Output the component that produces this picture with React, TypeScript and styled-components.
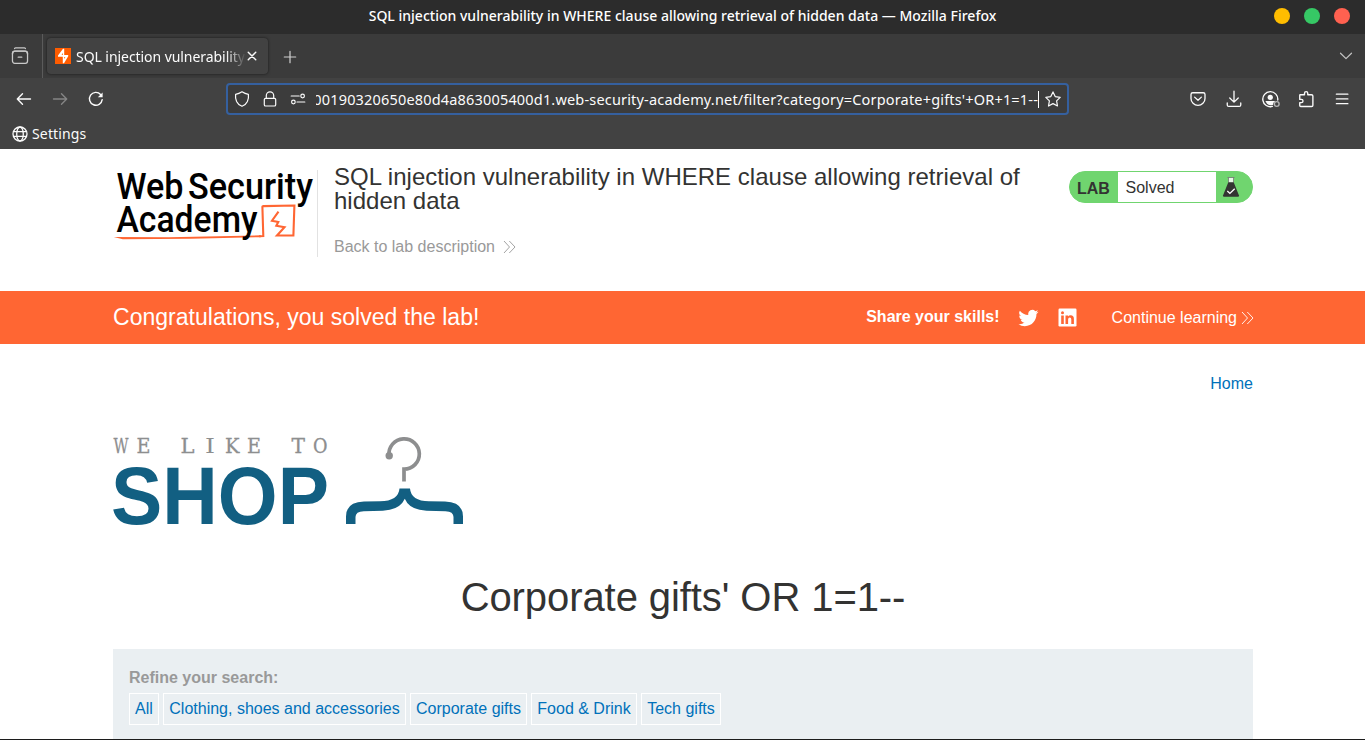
import React from 'react';
import styled, { createGlobalStyle } from 'styled-components';

const UI = `"Noto Sans", "Open Sans", sans-serif`;
const ARIAL = `"Liberation Sans", Arial, sans-serif`;

const GlobalStyle = createGlobalStyle`
  * { box-sizing: border-box; }
  body { margin: 0; background: #fff; overflow: hidden; }
`;

const Window = styled.div`
  width: 1365px;
  height: 740px;
  display: flex;
  flex-direction: column;
  overflow: hidden;
  border-bottom: 1px solid #1c1c1c;
`;

const TitleBar = styled.header`
  flex: none;
  height: 34px;
  display: grid;
  grid-template-columns: 1fr auto 1fr;
  align-items: center;
  padding: 0 15px 2px;
  background: #2c2c2c;
  color: #fff;
  font: 500 14px/20px ${UI};
`;
const WindowTitle = styled.span`
  grid-column: 2;
  letter-spacing: 0.01px;
  white-space: nowrap;
`;
const WindowButtons = styled.div`
  display: flex;
  justify-content: flex-end;
  gap: 14px;
`;
const Dot = styled.i<{ $color: string }>`
  width: 16px;
  height: 16px;
  border-radius: 50%;
  background: ${(p) => p.$color};
`;

const TabStrip = styled.div`
  flex: none;
  height: 44px;
  display: flex;
  align-items: center;
  background: #3b3b3b;
  color: #fbfbfb;
`;
const TabOverview = styled.div`
  width: 43px;
  height: 44px;
  padding-left: 11px;
  display: flex;
  align-items: center;
  border-right: 1px solid #5b5b5b;
`;
const Tab = styled.div`
  width: 221px;
  height: 36px;
  margin-left: 4px;
  padding: 0 8px;
  display: flex;
  align-items: center;
  border-radius: 4px;
  background: #424242;
  box-shadow: 0 0 3px rgba(0, 0, 0, 0.6);
`;
const TabTitle = styled.span`
  width: 170px;
  margin-left: 5px;
  padding-top: 1px;
  overflow: hidden;
  white-space: nowrap;
  font: 14px/20px ${UI};
  letter-spacing: -0.06px;
  mask-image: linear-gradient(to right, #000 150px, transparent 170px);
`;
const NewTab = styled.div`
  display: flex;
  margin-left: 14px;
  padding-top: 1px;
`;
const TabListButton = styled.div`
  display: flex;
  margin-left: auto;
  margin-right: 11px;
`;

const NavBar = styled.nav`
  flex: none;
  height: 42px;
  display: flex;
  align-items: center;
  background: #424242;
  color: #fbfbfb;
`;
const NavButtons = styled.div`
  width: 226px;
  padding-left: 16px;
  display: flex;
  gap: 20px;
`;
const AddressBar = styled.div`
  width: 843px;
  height: 32px;
  padding: 0 6px;
  display: flex;
  align-items: center;
  border: 2px solid #35609f;
  border-radius: 4px;
  background: #3c3c3c;
`;
const AddressIcons = styled.div`
  display: flex;
  gap: 12px;
`;
const Address = styled.div`
  width: 722px;
  margin-left: 10px;
  display: flex;
  justify-content: flex-end;
  overflow: hidden;
  white-space: nowrap;
  font: 14.5px/24px ${UI};
  letter-spacing: 0.175px;
`;
const Caret = styled.i`
  width: 1px;
  height: 17px;
  margin-right: 6px;
  background: #fff;
`;
const ToolButtons = styled.div`
  display: flex;
  gap: 16px;
  margin-left: auto;
  margin-right: 13px;
`;
const Bookmarks = styled.div`
  flex: none;
  height: 29px;
  padding: 0 12px 1px;
  display: flex;
  align-items: center;
  gap: 4px;
  background: #424242;
  color: #fbfbfb;
  font: 14px/20px ${UI};
  letter-spacing: 0.15px;
`;

const Page = styled.main`
  flex: 1;
  display: flex;
  flex-direction: column;
  background: #fff;
  color: #333332;
  font: 16px/20px ${ARIAL};
`;
const Container = styled.div`
  width: 1140px;
  margin: 0 auto 0 113px;
`;
const LabHeader = styled(Container)`
  height: 142px;
  display: flex;
  align-items: flex-start;
`;
const AcademyLogo = styled.div`
  width: 205px;
  height: 87px;
  margin-top: 21px;
  border-right: 1px solid #e2e2e2;
  svg { display: block; overflow: visible; }
`;
const LabTitle = styled.div`
  width: 700px;
  margin: 16px 0 0 16px;
`;
const Heading = styled.h2`
  margin: 0;
  font-weight: 400;
  font-size: 24px;
  line-height: 24px;
  letter-spacing: 0.015px;
`;
const BackLink = styled.a`
  display: flex;
  align-items: center;
  gap: 8px;
  margin-top: 24px;
  color: #999;
`;
const Badge = styled.div`
  width: 184px;
  height: 32px;
  margin: 22px 0 0 auto;
  display: flex;
  align-items: stretch;
  border: 1px solid #70d56f;
  border-radius: 16px;
  background: #70d56f;
  line-height: 33px;
`;
const BadgeLabel = styled.b`
  width: 48px;
  padding-left: 7px;
`;
const BadgeStatus = styled.span`
  width: 98px;
  padding-left: 7.5px;
  line-height: 31px;
  background: #fff;
`;
const BadgeIcon = styled.span`
  display: flex;
  align-items: center;
  padding-left: 6px;
`;

const Banner = styled.section`
  height: 53px;
  background: #ff6633;
  color: #fff;
`;
const BannerRow = styled(Container)`
  height: 53px;
  display: flex;
  align-items: center;
`;
const Congrats = styled.span`
  margin-right: auto;
  padding-bottom: 2px;
  font-size: 23px;
  letter-spacing: 0.02px;
`;
const Share = styled.b`
  padding-bottom: 2px;
`;
const Social = styled.div`
  display: flex;
  gap: 19px;
  margin: 0 35px 0 18px;
`;
const Continue = styled.a`
  display: flex;
  align-items: center;
  gap: 4px;
  margin-right: -1px;
`;

const TopLinks = styled(Container)`
  height: 93px;
  padding-top: 30px;
  text-align: right;
  color: #0071ba;
`;
const ShopLogo = styled(Container)`
  height: 88px;
  svg { display: block; overflow: visible; }
`;
const CategoryTitle = styled.h1`
  width: 1140px;
  margin: 49px 0 0 113px;
  height: 75px;
  text-align: center;
  font-weight: 400;
  font-size: 40px;
  line-height: 46px;
  letter-spacing: -0.08px;
`;
const Filters = styled(Container)`
  flex: 1;
  padding: 19px 16px 0;
  background: #eaeff2;
`;
const FilterLabel = styled.div`
  height: 25px;
  font-weight: 700;
  color: #999;
`;
const FilterList = styled.div`
  display: flex;
  gap: 4px;
`;
const Filter = styled.a<{ $w: number }>`
  width: ${(p) => p.$w}px;
  height: 32px;
  border: 1px solid #fff;
  text-align: center;
  white-space: nowrap;
  line-height: 29px;
  color: #0071ba;
`;

const Glyph = styled.svg`
  flex: none;
  stroke-linecap: round;
  stroke-linejoin: round;
`;

const Icon = ({ size = 16, children, color = 'currentColor', w = 1.2 }: {
  size?: number; children: React.ReactNode; color?: string; w?: number;
}) => (
  <Glyph width={size} height={size} viewBox="0 0 16 16" fill="none" stroke={color} strokeWidth={w}>
    {children}
  </Glyph>
);

const Chevrons = ({ color }: { color: string }) => (
  <svg width="13" height="14" viewBox="0 0 13 14" fill="none" stroke={color} strokeWidth="0.9">
    <path d="M1 1l5.5 6L1 13M6.3 1l5.7 6-5.7 6" />
  </svg>
);

const letters: [string, number, number][] = [
  ['W', 0.5, 15], ['E', 23.5, 14], ['L', 67.5, 14], ['I', 92, 10],
  ['K', 112, 14.5], ['E', 134, 14], ['T', 178.5, 13.5], ['O', 200, 14.5],
];

const filters: [string, number][] = [
  ['All', 30], ['Clothing, shoes and accessories', 243], ['Corporate gifts', 117],
  ['Food & Drink', 106], ['Tech gifts', 80],
];

export default function App() {
  return (
    <Window>
      <GlobalStyle />
      <TitleBar>
        <WindowTitle>SQL injection vulnerability in WHERE clause allowing retrieval of hidden data — Mozilla Firefox</WindowTitle>
        <WindowButtons>
          <Dot $color="#ffbd00" /><Dot $color="#36c865" /><Dot $color="#ff6150" />
        </WindowButtons>
      </TitleBar>

      <TabStrip>
        <TabOverview>
          <Icon size={18} color="#c9c9c9" w={1.15}>
            <path d="M3.2 1.4Q3.5.8 4.2.8h7.6q.7 0 1 .6" />
            <rect x="1.3" y="3.7" width="13.4" height="10.8" rx="2" />
            <path d="M1.3 6.2q0-2.5 2.5-2.5h8.4q2.5 0 2.5 2.5M6.4 9h3.2" />
          </Icon>
        </TabOverview>
        <Tab>
          <svg width="16" height="16" viewBox="0 0 16 16">
            <path fill="#ff5c00" d="M0 0h16v16H0z" />
            <path fill="#fff" d="M9.200.8H8L3 7.600v1.200h4.800v6.400H9l4.200-6.900V7.100H9.200z" />
            <path fill="#ff5c00" d="M7.800 4.800v2.200L6.600 7zM9.200 11V9h1.200z" />
          </svg>
          <TabTitle>SQL injection vulnerability in WHERE</TabTitle>
          <Icon size={12} w={1.9}><path d="M3 3l10 10M13 3L3 13" /></Icon>
        </Tab>
        <NewTab><Icon color="#d0d0d0"><path d="M8 2.3v11.4M2.3 8h11.4" /></Icon></NewTab>
        <TabListButton><Icon color="#c4c4c4"><path d="M2.5 5.2L8 10.6l5.5-5.4" /></Icon></TabListButton>
      </TabStrip>

      <NavBar>
        <NavButtons>
          <Icon w={1.4}><path d="M14.5 8h-13M6.5 2.8L1.3 8l5.2 5.2" /></Icon>
          <Icon w={1.4} color="#858585"><path d="M1.5 8h13M9.5 2.8L14.7 8l-5.2 5.2" /></Icon>
          <Icon w={1.4}>
            <path d="M14.2 8.6A6.4 6.4 0 1 1 12.6 3.5" />
            <path d="M14.6 1.4v4.8H9.8z" fill="currentColor" stroke="none" />
          </Icon>
        </NavButtons>
        <AddressBar>
          <AddressIcons>
            <Icon><path d="M8 .8q3 2 6.4 2.6.5 3.4-1 7Q11.800 13.800 8 15.300 4.200 13.800 2.600 10.400q-1.500-3.600-1-7Q5 2.800 8 .8z" /></Icon>
            <Icon>
              <rect x="2.300" y="7.300" width="11.400" height="7.700" rx="1.300" />
              <path d="M4.300 7.300V4.600a3.700 3.700 0 0 1 7.400 0v2.700" />
            </Icon>
            <Icon>
              <path d="M1.200 5h8M7 11h7.800" />
              <circle cx="12.600" cy="5" r="1.800" /><circle cx="3.400" cy="11" r="1.800" />
            </Icon>
          </AddressIcons>
          <Address>00190320650e80d4a863005400d1.web-security-academy.net/filter?category=Corporate+gifts'+OR+1=1--</Address>
          <Caret />
          <Icon><path d="M8 .9l2.200 4.700 5 .7-3.600 3.600.9 5.100L8 12.600 3.500 15l.9-5.100L.8 6.300l5-.7z" /></Icon>
        </AddressBar>
        <ToolButtons>
          <Icon size={20} w={1.050}>
            <path d="M3.800 3h8.400q1.400 0 1.400 1.400v3.100a5.600 5.600 0 0 1-11.200 0V4.400Q2.400 3 3.800 3z" />
            <path d="M5.300 6.500L8 9l2.700-2.500" />
          </Icon>
          <Icon size={20} w={1.050}>
            <path d="M8 1.800v8.400M4.600 7.200L8 10.500l3.400-3.300M2.600 11.200v1.500q0 1.200 1.200 1.200h8.400q1.200 0 1.200-1.200v-1.500" />
          </Icon>
          <Icon size={20} w={1.100}>
            <path d="M14.200 8.800A6 6 0 1 0 9.900 13.900" />
            <circle cx="8.200" cy="6.600" r="2.100" fill="currentColor" stroke="none" />
            <path d="M4.300 9.600h7.700q-.2 1-1.300 1.300l-.2 1.600q-3 1.200-4.900-.7z" fill="currentColor" stroke="none" />
            <circle cx="13.400" cy="12" r="1.900" stroke="#b5b5b5" />
          </Icon>
          <Icon size={20} w={1.100}>
            <path d="M3.300 4.600h3.500V3.400a1.300 1.300 0 0 1 2.600 0v1.200h2.900q1.200 0 1.200 1v7.400q0 1-1 1H3.800q-.8 0-.8-.8v-2.300h1.300a1.300 1.300 0 0 0 0-2.600H3V5q0-.4.3-.4z" />
          </Icon>
          <Icon size={20} w={1.050}><path d="M3.500 4.100h9.200M3.500 7.900h9.200M3.500 11.700h9.200" /></Icon>
        </ToolButtons>
      </NavBar>
      <Bookmarks>
        <Icon w={1.300}>
          <circle cx="8" cy="8" r="7" /><ellipse cx="8" cy="8" rx="3.300" ry="7" />
          <path d="M1.500 5.700h13M1.500 10.300h13" />
        </Icon>
        <span>Settings</span>
      </Bookmarks>

      <Page>
        <LabHeader>
          <AcademyLogo>
            <svg width="204" height="76" viewBox="0 0 204 76" fontFamily="Roboto, sans-serif" fontWeight="500" fontSize="37.500">
              <text x="3.500" y="29" textLength="67" lengthAdjust="spacingAndGlyphs">Web</text>
              <text x="75" y="29" textLength="125" lengthAdjust="spacingAndGlyphs">Security</text>
              <path d="M146 66.300l4.300-.3-.9-29q-.1-.9 1-.9l31-.6-1 29.900-16.400.1 7.500-8.200-8.200-1.500 2-3.900-6.300-1.200 6.500-9" fill="none" stroke="#ff6633" strokeWidth="2.100" />
              <path d="M.8 67l55 .3 92-2v1.900l-70 1.500-68 .6z" fill="#ff6633" />
              <text x="3.500" y="62" textLength="141" lengthAdjust="spacingAndGlyphs">Academy</text>
            </svg>
          </AcademyLogo>
          <LabTitle>
            <Heading>SQL injection vulnerability in WHERE clause allowing retrieval of hidden data</Heading>
            <BackLink>Back to lab description <Chevrons color="#999" /></BackLink>
          </LabTitle>
          <Badge>
            <BadgeLabel>LAB</BadgeLabel>
            <BadgeStatus>Solved</BadgeStatus>
            <BadgeIcon>
              <svg width="18" height="20" viewBox="0 0 18 20">
                <path d="M6.500.8h5v5h-5z" fill="#e8f7e8" />
                <path d="M5.500.5h7M6.500.5v5M11.500.5v5" stroke="#777" strokeWidth=".8" />
                <path d="M6.300 5.200h5.400l5.200 13q.4 1.600-1 1.600H2.100q-1.400 0-1-1.600z" fill="#333332" />
                <path d="M5.300 14l2.600 2.400 4.800-4.700" fill="none" stroke="#fff" strokeWidth="1.300" />
              </svg>
            </BadgeIcon>
          </Badge>
        </LabHeader>

        <Banner>
          <BannerRow>
            <Congrats>Congratulations, you solved the lab!</Congrats>
            <Share>Share your skills!</Share>
            <Social>
              <svg width="21" height="20" viewBox="0 0 24 24" fill="#fff">
                <path d="M23.950 4.570a10 10 0 0 1-2.820.770 4.960 4.960 0 0 0 2.160-2.720c-.950.550-2 .950-3.130 1.180a4.920 4.920 0 0 0-8.380 4.480C7.690 8.100 4.070 6.130 1.640 3.160a4.920 4.920 0 0 0 1.520 6.570 4.900 4.900 0 0 1-2.230-.610v.060a4.920 4.920 0 0 0 3.950 4.830 5 5 0 0 1-2.210.080 4.930 4.930 0 0 0 4.600 3.420A9.870 9.870 0 0 1 0 19.540a13.990 13.990 0 0 0 7.550 2.210c9.050 0 14-7.500 14-13.980 0-.210 0-.420-.020-.630a9.940 9.940 0 0 0 2.460-2.550z" />
              </svg>
              <svg width="19" height="19" viewBox="0 0 19 19">
                <rect x=".5" y=".5" width="18" height="18" rx="1.200" fill="#fff" />
                <circle cx="4.500" cy="4.800" r="1.500" fill="#f63" />
                <path fill="#f63" d="M3.200 7.400h2.600V16H3.200zM7.500 7.400H10v1.200q.8-1.400 2.600-1.400 3.300 0 3.300 3.700V16h-2.600v-4.500q0-2-1.500-2-1.700 0-1.700 2V16H7.500z" />
              </svg>
            </Social>
            <Continue>Continue learning <Chevrons color="#fff" /></Continue>
          </BannerRow>
        </Banner>

        <TopLinks>Home</TopLinks>
        <ShopLogo>
          <svg width="352" height="88" viewBox="0 0 352 88">
            <g fill="#8d8e8f" stroke="#8d8e8f" strokeWidth=".3" fontFamily="'DejaVu Serif', serif" fontSize="21">
              {letters.map(([c, x, w]) => (
                <text key={x} x={x} y="16" strokeWidth={c === 'I' ? 0 : undefined} textLength={w} lengthAdjust="spacingAndGlyphs">{c}</text>
              ))}
            </g>
            <text x="-2" y="87" fill="#125f82" fontFamily="'Liberation Sans', sans-serif" fontWeight="700"
              fontSize="81" textLength="218" lengthAdjust="spacingAndGlyphs">SHOP</text>
            <path d="M276 18.500A15.200 15.200 0 1 1 291 32.200V44.500" fill="none" stroke="#8d8e8f" strokeWidth="3.700" />
            <circle cx="276.200" cy="18.800" r="3.700" fill="#8d8e8f" />
            <path d="M286.500 51.500h10.500q1 12.500 19 12.800l16 .2q18 .5 18 15V87h-9.500v-7q0-5.500-8-5.800l-19-.5q-17-.7-21.700-12-5 11.300-22 12l-19 .5q-8.300.3-8.300 5.800v7H233v-7.500q0-14.500 18-15l16-.2q18.500-.3 19.500-12.800z" fill="#125f82" />
          </svg>
        </ShopLogo>
        <CategoryTitle>Corporate gifts' OR 1=1--</CategoryTitle>
        <Filters>
          <FilterLabel>Refine your search:</FilterLabel>
          <FilterList>
            {filters.map(([name, w]) => <Filter key={name} $w={w}>{name}</Filter>)}
          </FilterList>
        </Filters>
      </Page>
    </Window>
  );
}
